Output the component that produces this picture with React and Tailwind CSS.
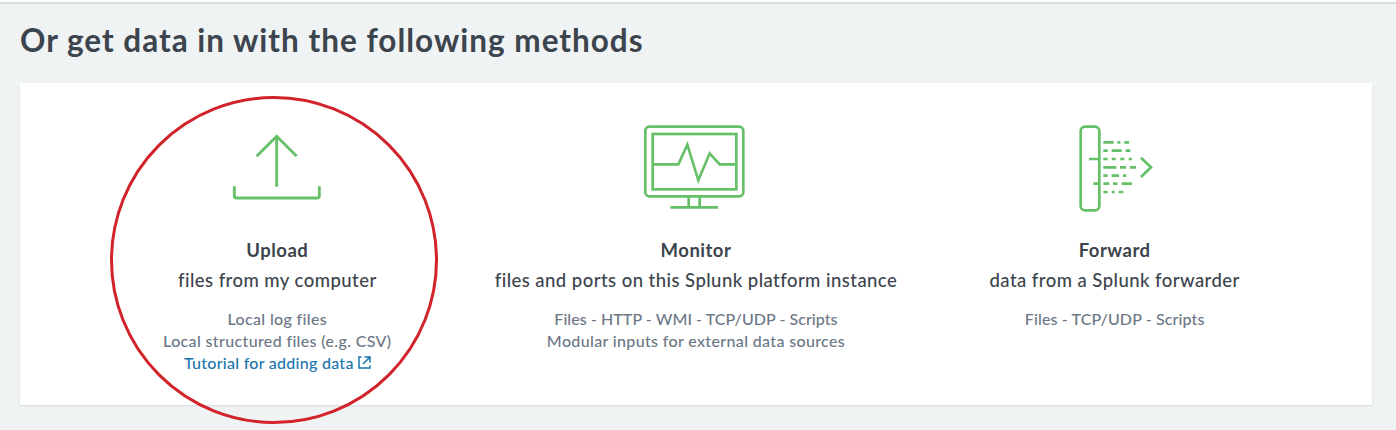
function UploadIcon() {
  return (
    <svg className="h-[88px] w-[104px] overflow-visible" viewBox="16 15 312 264" fill="none" stroke="#65c067" strokeWidth="8.5">
      <path d="M171 200V50M111 109l60-60 60 60" />
      <path d="M44 199v28q0 7 7 7h241q7 0 7-7v-28" />
    </svg>
  );
}

function MonitorIcon() {
  return (
    <svg className="h-[88px] w-[104px] overflow-visible" viewBox="42 30 312 264" fill="none" stroke="#65c067" strokeWidth="8">
      <rect x="46" y="35" width="294" height="209" rx="12" />
      <rect x="68" y="57" width="251" height="166" />
      <path d="M68 148h77l27-59 33 107 34-81 30 33h50" />
      <path d="M176 244v33M209 244v33M121 277h143" />
    </svg>
  );
}

function ForwardIcon() {
  return (
    <svg className="h-[88px] w-[104px] overflow-visible" viewBox="8 45 312 264" fill="none" stroke="#65c067" strokeWidth="8">
      <rect x="61" y="50" width="56" height="251" rx="13" />
      <path d="M129 97h31M171 97h9M192 97h14" />
      <path d="M129 122h13M154 122h30M196 122h14" />
      <path d="M86 147h28M129 147h13M154 147h12M180 147h12M205 147h10" />
      <path d="M129 172h39M179 172h18M209 172h18" />
      <path d="M129 197h13M154 197h22M188 197h10" />
      <path d="M99 221h15M129 221h18M158 221h13M184 221h31" />
      <path d="M129 246h13M154 246h9M175 246h14" />
      <path d="M242 143l30 29-30 29" />
    </svg>
  );
}

function ExternalIcon() {
  return (
    <svg className="relative -top-px ml-[4px] size-[13px]" viewBox="0 0 13 13" fill="none" stroke="#1a75ac" strokeWidth="1.5">
      <path d="M3.5 1H1v11h11V9.5M5 8l6.5-6.5M6.5 1H12v5.5" />
    </svg>
  );
}

function Method({ icon, title, subtitle, children }) {
  return (
    <div className="flex flex-col items-center whitespace-nowrap">
      {icon}
      <h2 className="mt-[22px] text-[18.5px] leading-[30px] font-bold tracking-[0.5px] text-[#3c444d]">{title}</h2>
      <p className="text-[18.5px] leading-[30px] font-medium tracking-[0.45px] text-[#3c444d]">{subtitle}</p>
      <div className="mt-[13px] flex flex-col items-center text-[16px] leading-[22px] font-medium tracking-[0.35px] text-[#6b7785]">{children}</div>
    </div>
  );
}

export default function App() {
  return (
    <main className="relative h-[430px] w-[1396px] overflow-hidden bg-white pt-[2px] font-['Lato',sans-serif]">
      <div className="h-[428px] border-t-2 border-[#d9dbdc] bg-[#eff3f4] px-5">
        <h1 className="pt-[17px] text-[31.5px] leading-[38px] font-bold tracking-[1px] whitespace-nowrap text-[#3c444d]">
          Or get data in with the following methods
        </h1>
        <section className="mt-[24px] grid h-[322px] w-[1352px] grid-cols-3 bg-white px-12 pt-[42px] shadow-[0_1px_2px_rgba(0,0,0,0.1)]">
          <Method icon={<UploadIcon />} title="Upload" subtitle="files from my computer">
            <span>Local log files</span>
            <span>Local structured files (e.g. CSV)</span>
            <a className="flex items-center tracking-[0.27px] text-[#1a75ac]">
              <span>Tutorial for adding data</span>
              <ExternalIcon />
            </a>
          </Method>
          <Method icon={<MonitorIcon />} title="Monitor" subtitle="files and ports on this Splunk platform instance">
            <span className="tracking-[0.06px]">Files - HTTP - WMI - TCP/UDP - Scripts</span>
            <span>Modular inputs for external data sources</span>
          </Method>
          <Method icon={<ForwardIcon />} title="Forward" subtitle="data from a Splunk forwarder">
            <span className="tracking-[0.12px]">Files - TCP/UDP - Scripts</span>
          </Method>
        </section>
      </div>
      <div className="pointer-events-none absolute top-24 left-[110px] size-[328px] rounded-full border-[3px] border-[#d2232a]" />
    </main>
  );
}
